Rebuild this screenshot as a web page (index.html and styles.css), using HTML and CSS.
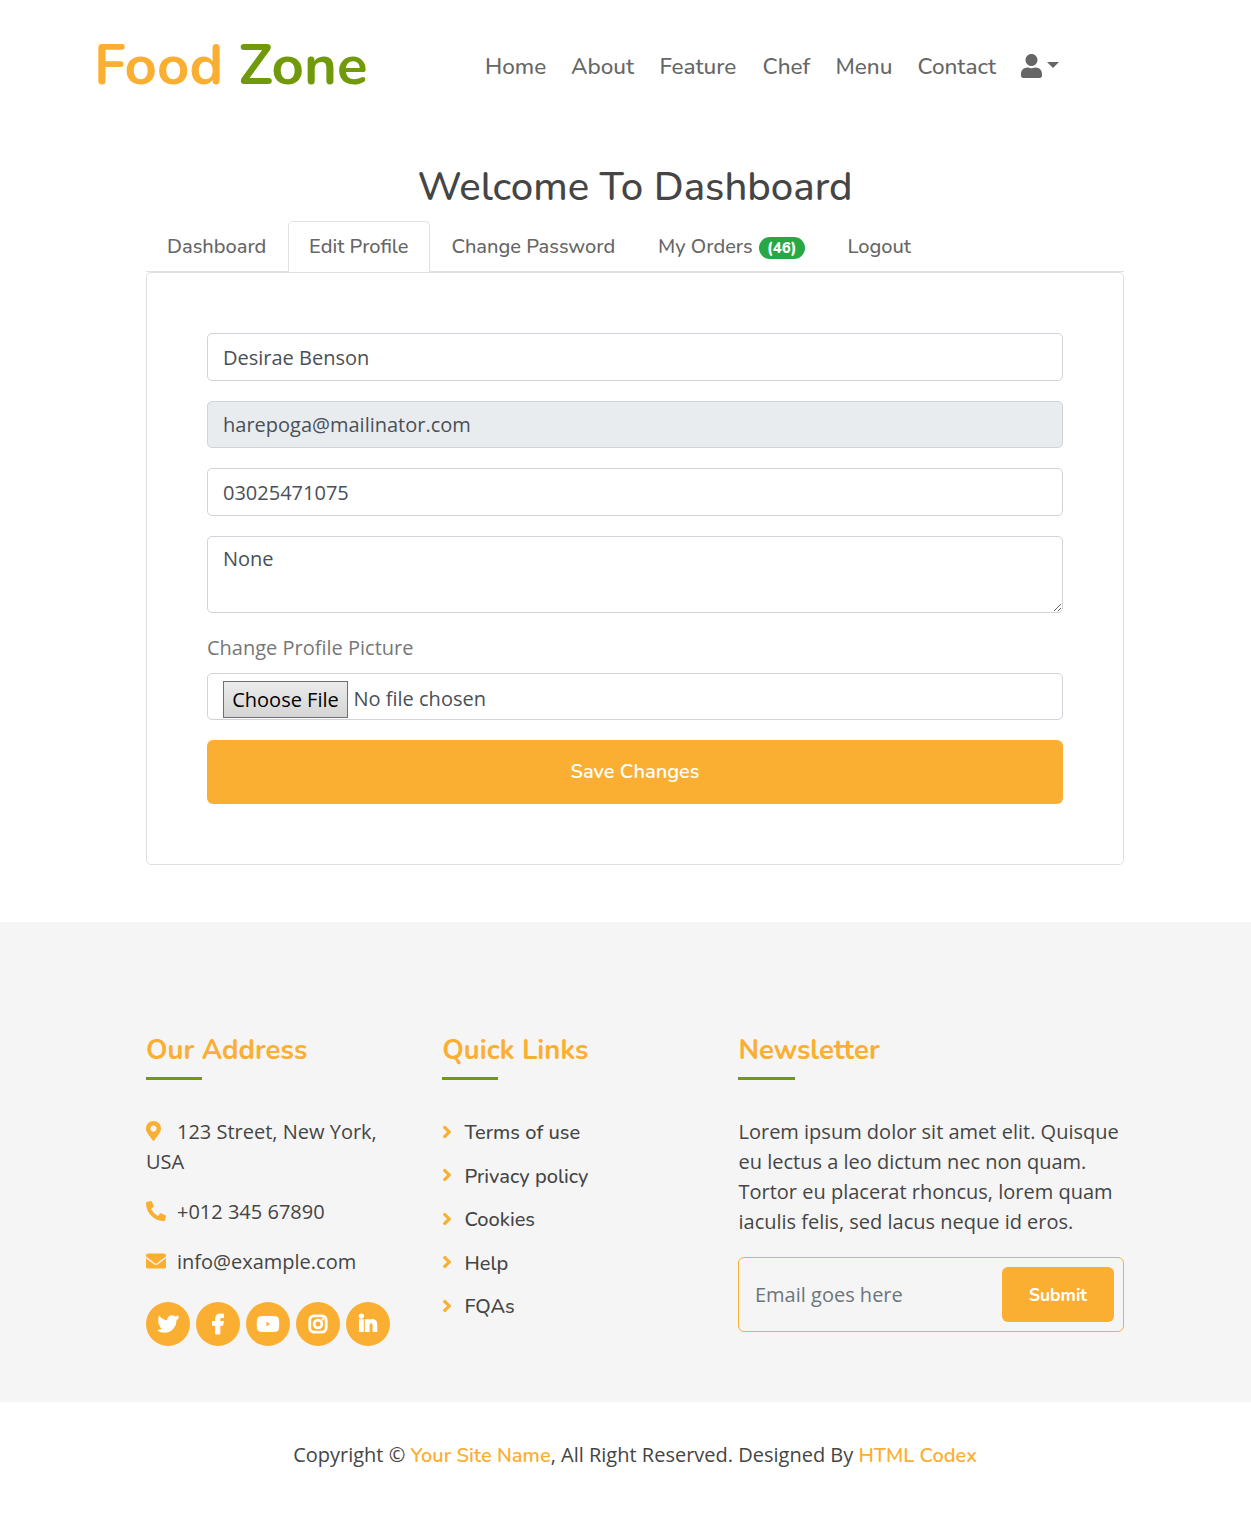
FILE: index.html
```html
<!DOCTYPE html>
<html lang="en">
<head>
<meta charset="utf-8">
<title>Food Zone - Dashboard</title>
<link rel="stylesheet" href="styles.css">
</head>
<body>
<header class="navbar">
  <a class="brand">Food <span class="brand-green">Zone</span></a>
  <nav class="nav">
    <a>Home</a><a>About</a><a>Feature</a><a>Chef</a><a>Menu</a><a>Contact</a>
    <a class="account"><svg class="user" viewBox="0 0 448 512"><path d="M224 256c70.7 0 128-57.3 128-128S294.7 0 224 0 96 57.3 96 128s57.3 128 128 128zm89.6 32h-16.7c-22.2 10.2-46.9 16-72.9 16s-50.6-5.8-72.9-16h-16.7C60.2 288 0 348.2 0 422.4V464c0 26.5 21.5 48 48 48h352c26.5 0 48-21.5 48-48v-41.6c0-74.2-60.2-134.4-134.4-134.4z"/></svg><span class="caret"></span></a>
  </nav>
</header>

<main class="container">
  <h1 class="title">Welcome To Dashboard</h1>
  <nav class="tabs">
    <a class="tab">Dashboard</a>
    <a class="tab active">Edit Profile</a>
    <a class="tab">Change Password</a>
    <a class="tab">My Orders<span class="badge">(46)</span></a>
    <a class="tab">Logout</a>
  </nav>
  <form class="card">
    <input class="control low" type="text" value="Desirae Benson">
    <input class="control readonly" type="text" value="harepoga@mailinator.com" readonly>
    <input class="control low" type="text" value="03025471075">
    <textarea class="control area">None</textarea>
    <label class="label">Change Profile Picture</label>
    <div class="control file"><span class="choose">Choose File</span><span class="chosen">No file chosen</span></div>
    <button class="save" type="button">Save Changes</button>
  </form>
</main>

<footer class="footer">
  <div class="columns">
    <section>
      <h2 class="heading">Our Address</h2>
      <p class="info"><svg class="ico" viewBox="0 0 512 512"><path d="M172.268 501.67C26.97 291.031 0 269.413 0 192 0 85.961 85.961 0 192 0s192 85.961 192 192c0 77.413-26.97 99.031-172.268 309.67-9.535 13.774-29.93 13.773-39.464 0zM192 272c44.183 0 80-35.817 80-80s-35.817-80-80-80-80 35.817-80 80 35.817 80 80 80z"/></svg>123 Street, New York, USA</p>
      <p class="info"><svg class="ico" viewBox="0 0 512 512"><path d="M497.39 361.8l-112-48a24 24 0 0 0-28 6.9l-49.6 60.6A370.66 370.66 0 0 1 130.6 204.11l60.6-49.6a23.94 23.94 0 0 0 6.9-28l-48-112A24.16 24.16 0 0 0 122.6.61l-104 24A24 24 0 0 0 0 48c0 256.5 207.9 464 464 464a24 24 0 0 0 23.4-18.6l24-104a24.29 24.29 0 0 0-14.01-27.6z"/></svg>+012 345 67890</p>
      <p class="info"><svg class="ico" viewBox="0 0 512 512"><path d="M502.3 190.8c3.9-3.1 9.7-.2 9.7 4.7V400c0 26.5-21.5 48-48 48H48c-26.5 0-48-21.5-48-48V195.6c0-5 5.7-7.8 9.7-4.7 22.4 17.4 52.1 39.5 154.1 113.6 21.1 15.4 56.7 47.8 92.2 47.6 35.7.3 72-32.8 92.3-47.6 102-74.1 131.6-96.3 154-113.7zM256 320c23.2.4 56.6-29.2 73.4-41.4 132.7-96.3 142.8-104.7 173.4-128.7 5.8-4.5 9.2-11.5 9.2-18.9v-19c0-26.5-21.5-48-48-48H48c-26.5 0-48 21.5-48 48v19c0 7.4 3.4 14.3 9.2 18.9 30.6 23.9 40.7 32.4 173.4 128.7 16.8 12.2 50.2 41.8 73.4 41.4z"/></svg>info@example.com</p>
      <div class="social">
        <a><svg viewBox="0 0 512 512"><path d="M459.37 151.716c.325 4.548.325 9.097.325 13.645 0 138.72-105.583 298.558-298.558 298.558-59.452 0-114.68-17.219-161.137-47.106 8.447.974 16.568 1.299 25.34 1.299 49.055 0 94.213-16.568 130.274-44.832-46.132-.975-84.792-31.188-98.112-72.772 6.498.974 12.995 1.624 19.818 1.624 9.421 0 18.843-1.3 27.614-3.573-48.081-9.747-84.143-51.98-84.143-102.985v-1.299c13.969 7.797 30.214 12.67 47.431 13.319-28.264-18.843-46.781-51.005-46.781-87.391 0-19.492 5.197-37.36 14.294-52.954 51.655 63.675 129.3 105.258 216.365 109.807-1.624-7.797-2.599-15.918-2.599-24.04 0-57.828 46.782-104.934 104.934-104.934 30.213 0 57.502 12.67 76.67 33.137 23.715-4.548 46.456-13.32 66.599-25.34-7.798 24.366-24.366 44.833-46.132 57.827 21.117-2.273 41.584-8.122 60.426-16.243-14.292 20.791-32.161 39.308-52.628 54.253z"/></svg></a>
        <a><svg viewBox="-96 0 512 512"><path d="M279.14 288l14.22-92.66h-88.91v-60.13c0-25.35 12.42-50.06 52.24-50.06h40.42V6.26S260.43 0 225.36 0c-73.22 0-121.08 44.38-121.08 124.72v70.62H22.89V288h81.39v224h100.17V288z"/></svg></a>
        <a><svg viewBox="32 0 512 512"><path d="M549.655 124.083c-6.281-23.65-24.787-42.276-48.284-48.597C458.781 64 288 64 288 64S117.22 64 74.629 75.486c-23.497 6.322-42.003 24.947-48.284 48.597-11.412 42.867-11.412 132.305-11.412 132.305s0 89.438 11.412 132.305c6.281 23.65 24.787 41.5 48.284 47.821C117.22 448 288 448 288 448s170.78 0 213.371-11.486c23.497-6.321 42.003-24.171 48.284-47.821 11.412-42.867 11.412-132.305 11.412-132.305s0-89.438-11.412-132.305zm-317.51 213.508V175.185l142.739 81.205-142.739 81.201z"/></svg></a>
        <a><svg class="insta" viewBox="0 0 20 20"><rect x="1.8" y="1.8" width="16.4" height="16.4" rx="4.4"/><circle cx="10" cy="10" r="3.9"/><circle class="dot" cx="14.8" cy="5.2" r="1.2"/></svg></a>
        <a><svg viewBox="-32 0 512 512"><path d="M100.28 448H7.4V148.9h92.88zM53.79 108.1C24.09 108.1 0 83.5 0 53.8a53.79 53.79 0 0 1 107.58 0c0 29.7-24.1 54.3-53.79 54.3zM447.9 448h-92.68V302.4c0-34.7-.7-79.2-48.29-79.2-48.29 0-55.69 37.7-55.69 76.7V448h-92.78V148.9h89.08v40.8h1.3c12.4-23.5 42.69-48.3 87.88-48.3 94 0 111.28 61.9 111.28 142.3V448z"/></svg></a>
      </div>
    </section>
    <section>
      <h2 class="heading">Quick Links</h2>
      <ul class="links">
        <li><svg class="chev" viewBox="0 0 256 512"><path d="M224.3 273l-136 136c-9.4 9.4-24.6 9.4-33.9 0l-22.6-22.6c-9.4-9.4-9.4-24.6 0-33.9l96.4-96.4-96.4-96.4c-9.4-9.4-9.4-24.6 0-33.9L54.3 103c9.4-9.4 24.6-9.4 33.9 0l136 136c9.5 9.4 9.5 24.6.1 34z"/></svg>Terms of use</li>
        <li><svg class="chev" viewBox="0 0 256 512"><path d="M224.3 273l-136 136c-9.4 9.4-24.6 9.4-33.9 0l-22.6-22.6c-9.4-9.4-9.4-24.6 0-33.9l96.4-96.4-96.4-96.4c-9.4-9.4-9.4-24.6 0-33.9L54.3 103c9.4-9.4 24.6-9.4 33.9 0l136 136c9.5 9.4 9.5 24.6.1 34z"/></svg>Privacy policy</li>
        <li><svg class="chev" viewBox="0 0 256 512"><path d="M224.3 273l-136 136c-9.4 9.4-24.6 9.4-33.9 0l-22.6-22.6c-9.4-9.4-9.4-24.6 0-33.9l96.4-96.4-96.4-96.4c-9.4-9.4-9.4-24.6 0-33.9L54.3 103c9.4-9.4 24.6-9.4 33.9 0l136 136c9.5 9.4 9.5 24.6.1 34z"/></svg>Cookies</li>
        <li><svg class="chev" viewBox="0 0 256 512"><path d="M224.3 273l-136 136c-9.4 9.4-24.6 9.4-33.9 0l-22.6-22.6c-9.4-9.4-9.4-24.6 0-33.9l96.4-96.4-96.4-96.4c-9.4-9.4-9.4-24.6 0-33.9L54.3 103c9.4-9.4 24.6-9.4 33.9 0l136 136c9.5 9.4 9.5 24.6.1 34z"/></svg>Help</li>
        <li><svg class="chev" viewBox="0 0 256 512"><path d="M224.3 273l-136 136c-9.4 9.4-24.6 9.4-33.9 0l-22.6-22.6c-9.4-9.4-9.4-24.6 0-33.9l96.4-96.4-96.4-96.4c-9.4-9.4-9.4-24.6 0-33.9L54.3 103c9.4-9.4 24.6-9.4 33.9 0l136 136c9.5 9.4 9.5 24.6.1 34z"/></svg>FQAs</li>
      </ul>
    </section>
    <section>
      <h2 class="heading">Newsletter</h2>
      <p>Lorem ipsum dolor sit amet elit. Quisque eu lectus a leo dictum nec non quam. Tortor eu placerat rhoncus, lorem quam iaculis felis, sed lacus neque id eros.</p>
      <form class="subscribe"><input class="email" type="text" placeholder="Email goes here"><button class="submit" type="button">Submit</button></form>
    </section>
  </div>
</footer>
<div class="copyright">Copyright © <a>Your Site Name</a>, All Right Reserved. Designed By <a>HTML Codex</a></div>
</body>
</html>
```
FILE: styles.css
```css
* { box-sizing: border-box; }
body { margin: 0; background: #fff; color: #454545; font: 20px/30px "Open Sans", sans-serif; }
h1, h2, p, ul { margin: 0; padding: 0; }
a { white-space: nowrap; }

.navbar { height: 160px; padding-left: 94px; display: flex; align-items: flex-start; }
.brand { width: 391px; padding-top: 31px; font: 700 56.25px/70px Nunito, Lato, sans-serif; color: #fbaf32; }
.brand-green { color: #719a0a; }
.nav { display: grid; grid-template-columns: 86px 88.5px 103px 73px 82px 103.5px 40px; padding-top: 52px; font: 550 22.5px/30px Nunito, Lato, sans-serif; color: #666; }
.account { display: flex; align-items: center; gap: 5px; height: 27px; }
.user { width: 21px; height: 24px; fill: #666; }
.caret { border: 6px solid transparent; border-top-color: #666; border-bottom: 0; margin-top: -1px; }

.container { width: 978px; margin-left: 146px; }
.title { height: 61px; padding-top: 1px; text-align: center; font: 550 40.1px/52px Nunito, Lato, sans-serif; color: #454545; }
.tabs { display: grid; grid-template-columns: 142px 142.4px 206.6px 189.4px 106px; height: 51px; border-bottom: 1px solid #dee2e6; font: 550 20.05px/30px Nunito, Lato, sans-serif; color: #666; }
.tab { height: 51px; padding: 10px 20px; border: 1px solid transparent; border-bottom: 0; border-radius: 5px 5px 0 0; display: flex; gap: 6px; }
.tab.active { background: #fff; border-color: #dee2e6; }
.badge { align-self: flex-start; margin-top: 5px; width: 46px; height: 22px; border-radius: 11px; background: #28a745; color: #fff; text-align: center; font: 800 15px/22px Nunito, Lato, sans-serif; }
.card { height: 593px; padding: 60px; border: 1px solid #dfdfdf; border-radius: 5px; display: flex; flex-direction: column; }
.control { flex: none; width: 100%; height: 47.5px; margin: 0 0 20px; padding: 7px 15px; border: 1px solid #ced4da; border-radius: 5px; background: #fff; color: #495057; font: 20px/30px "Open Sans", sans-serif; outline: 0; }
.low { padding: 8px 15px 6px; }
.readonly { background: #e9ecef; }
.area { height: 77px; display: block; resize: vertical; }
.label { color: #777; height: 40.5px; }
.file { display: flex; gap: 5.5px; height: 47px; margin-bottom: 20px; }
.choose { width: 125px; height: 37px; border: 1px solid #707070; background: linear-gradient(#ebebeb, #d5d5d5); color: #000; text-align: center; line-height: 36px; white-space: nowrap; }
.chosen { line-height: 36px; }
.save { height: 64px; flex: none; border: 0; border-radius: 6px; background: #fbaf32; color: #fff; font: 600 20px/30px Nunito, Lato, sans-serif; }

.footer { height: 480px; margin-top: 57px; padding: 110px 127px 0 146px; background: #f5f5f5; }
.columns { display: grid; grid-template-columns: 256.2px 256.3px 385.5px; column-gap: 40px; }
.heading { height: 48px; margin-bottom: 37px; font: 700 27.5px/36px Nunito, Lato, sans-serif; color: #fbaf32; }
.heading::after { content: ""; display: block; width: 56.25px; height: 3px; margin-top: 9px; background: #719a0a; }
.info { margin-bottom: 20px; }
.ico { width: 20px; height: 20px; margin-right: 11px; fill: #fbaf32; vertical-align: -2px; }
.social { display: flex; gap: 6px; padding-top: 5px; }
.social a { width: 44px; height: 44px; border-radius: 50%; background: #fbaf32; display: flex; align-items: center; justify-content: center; }
.social svg { width: 20px; height: 20px; overflow: visible; fill: #fff; stroke: #fff; stroke-width: 30; }
.social .insta { fill: none; stroke-width: 2.8; }
.social .insta .dot { fill: #fff; stroke: none; }
.links { padding-top: 1px; list-style: none; font: 550 20.05px/30px Nunito, Lato, sans-serif; }
.links li { display: flex; height: 43.5px; white-space: nowrap; }
.chev { width: 10px; height: 20px; margin: 3.5px 12.3px 0 0; fill: #fbaf32; }
.subscribe { height: 75px; margin-top: 20px; padding: 9px; border: 1px solid #fbaf32; border-radius: 6px; display: flex; justify-content: space-between; }
.email { width: 220px; height: 55px; padding: 0 6.5px; border: 0; background: none; color: #6c757d; font: 20px "Open Sans", sans-serif; }
.email::placeholder { color: #6c757d; }
.submit { width: 112px; height: 55px; border: 0; border-radius: 6px; background: #fbaf32; color: #fff; font: 700 17.5px/30px Nunito, Lato, sans-serif; }
.copyright { height: 122px; padding: 38px 0 0 19px; text-align: center; white-space: nowrap; }
.copyright a { font-family: Nunito, Lato, sans-serif; font-weight: 600; color: #fbaf32; }
```
